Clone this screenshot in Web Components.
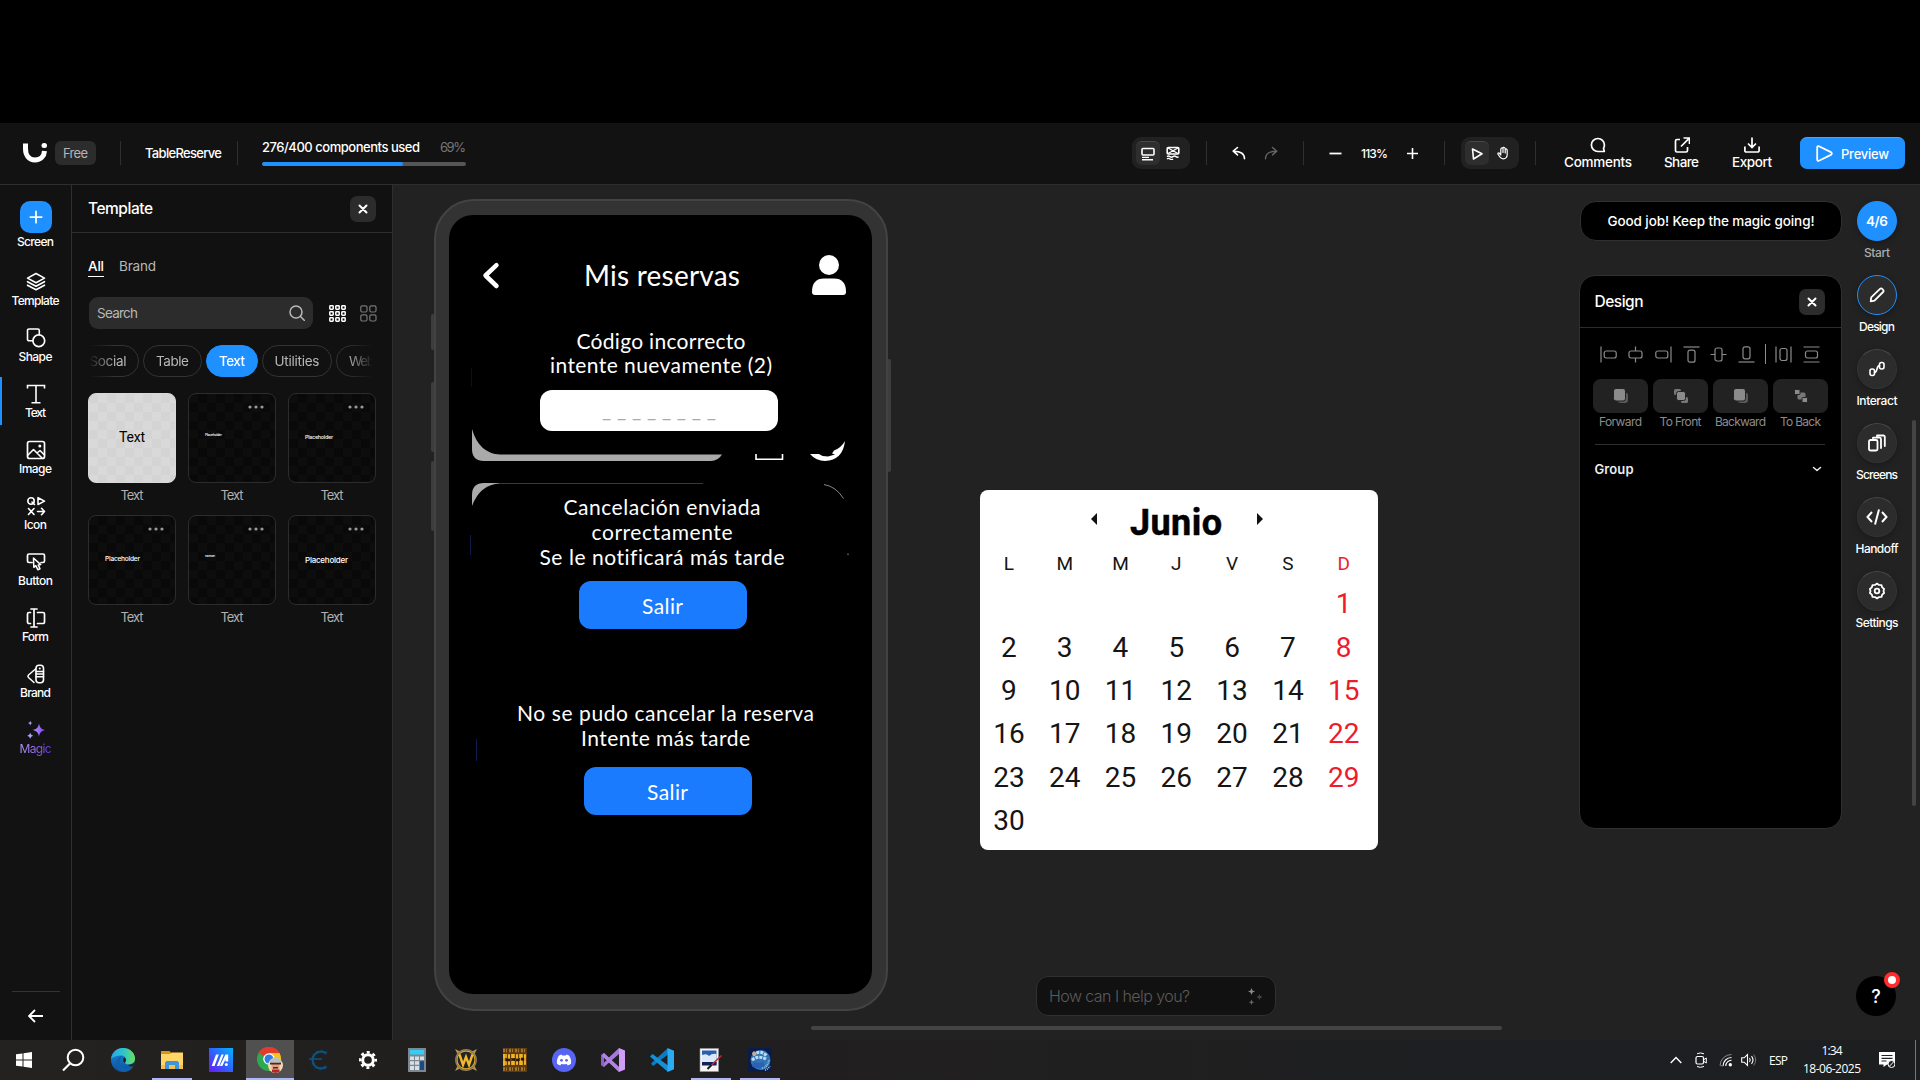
<!DOCTYPE html>
<html lang="es">
<head>
<meta charset="utf-8">
<title>TableReserve</title>
<style>
html,body{margin:0;height:100%;background:#000;overflow:hidden}
body{font-family:Inter,"Liberation Sans",sans-serif;color:#fff;width:1920px;height:1080px}
</style>
</head>
<body>
<editor-app></editor-app>
<script>
const S='fill="none" stroke="currentColor" stroke-linecap="round" stroke-linejoin="round"';
const ICONS={
logo:['0 0 24 20','<path d="M2.5 0.5v5.3c0 6.500 3.700 11.200 9.500 11.200s9.200-4.200 9.500-9" fill="none" stroke="#fff" stroke-width="5"/><rect x="18.500" y="0" width="5.500" height="5" rx="2.500" fill="#fff"/>'],
plus:['0 0 16 16',`<path d="M8 1.500v13M1.500 8h13" ${S} stroke-width="2"/>`],
x:['0 0 16 16',`<path d="M4.500 4.500l7 7M11.500 4.500l-7 7" ${S} stroke-width="2"/>`],
template:['0 0 20 20',`<path d="M10 1.500l8.500 4.600L10 10.700 1.500 6.100z M1.500 9.700L10 14.300l8.500-4.600 M1.500 13.200L10 17.800l8.500-4.600" ${S} stroke-width="1.600"/>`],
shape:['0 0 20 20',`<path d="M13.300 6V2.500a1.500 1.500 0 0 0-1.500-1.500H3a1.500 1.500 0 0 0-1.500 1.500v8.800A1.500 1.500 0 0 0 3 12.800h3.500" ${S} stroke-width="1.600"/><circle cx="12.800" cy="12.800" r="5.900" fill="none" stroke="currentColor" stroke-width="1.700"/>`],
text:['0 0 20 20',`<path d="M1.500 4.500v-3h17v3M10 1.500v17M5.500 18.700h9" fill="none" stroke="currentColor" stroke-width="1.600"/>`],
image:['0 0 20 20',`<rect x="1.500" y="1.500" width="17" height="17" rx="2" ${S} stroke-width="1.700"/><path d="M2 15l5.500-5.500L16 18M11 13l3-2.500 4.500 4.500" ${S} stroke-width="1.600"/><circle cx="13.800" cy="6" r="1.500" fill="currentColor"/>`],
icon:['0 0 20 20',`<circle cx="5" cy="5" r="3.200" ${S} stroke-width="1.600"/><path d="M6 6l2.500 2.500M12 1.700v6.800l6.500-3.400zM2.500 12.500l5.500 6M8 12.500l-5.500 6M11.500 15.500h7M15.500 12.300l3 3.200-3 3.200" ${S} stroke-width="1.600"/>`],
button:['0 0 20 20',`<path d="M6 10.500H3a1.500 1.500 0 0 1-1.500-1.500V3.500A1.500 1.500 0 0 1 3 2h14a1.500 1.500 0 0 1 1.500 1.500V9a1.500 1.500 0 0 1-1.500 1.500h-2" ${S} stroke-width="1.700"/><path d="M7.500 6l.3 9.300 2-1.600 2 4 2.200-1-1.800-3.800 2.500-.3z" ${S} stroke-width="1.500"/>`],
form:['0 0 20 20',`<path d="M4.500 4.500H3A1.500 1.500 0 0 0 1.500 6v8A1.500 1.500 0 0 0 3 15.500h1.500M11.500 4.500H17A1.500 1.500 0 0 1 18.500 6v8a1.500 1.500 0 0 1-1.500 1.500h-5.500M8 1v18M5 1h6M5 19h6" ${S} stroke-width="1.700"/>`],
brand:['0 0 20 20',`<rect x="10" y="1.300" width="7.500" height="17.400" rx="3" ${S} stroke-width="1.600"/><path d="M10 7.500h7.500M10 12.800h7.500M9.500 5L2.500 11a1.800 1.800 0 0 0 0 2.500L8 18.500M10 10h7.500" ${S} stroke-width="1.500"/><circle cx="13.800" cy="4.500" r="1" fill="currentColor"/>`],
magic:['0 0 20 20','<defs><linearGradient id="m" x1="0" x2="1"><stop offset="0" stop-color="#b79bff"/><stop offset="1" stop-color="#7a3df0"/></linearGradient></defs><path fill="url(#m)" d="M13 3.500c.9 4 2 5.500 6 6.500-4 1-5.100 2.500-6 6.500-.9-4-2-5.500-6-6.500 4-1 5.100-2.500 6-6.500z"/><path fill="#b79bff" d="M4.200 .8l.7 1.600 1.600.7-1.600.7-.7 1.600-.7-1.600-1.600-.7 1.600-.7zM4.200 12.800l1 2 2 1-2 1-1 2-1-2-2-1 2-1z"/>'],
back:['0 0 16 16',`<path d="M15 8H1M7 2L1 8l6 6" fill="none" stroke="currentColor" stroke-width="1.800"/>`],
search:['0 0 16 16',`<circle cx="7" cy="7" r="6" ${S} stroke-width="1.500"/><path d="M11.500 11.500l4 4" ${S} stroke-width="1.500"/>`],
grid3:['0 0 17 17',[0,6,12].map(y=>[0,6,12].map(x=>`<rect x="${x+.8}" y="${y+.8}" width="3.400" height="3.400" rx=".6" ${S} stroke-width="1.500"/>`).join('')).join('')],
grid2:['0 0 17 17',[0,9].map(y=>[0,9].map(x=>`<rect x="${x+.8}" y="${y+.8}" width="6.200" height="6.200" rx="1.500" ${S} stroke-width="1.200"/>`).join('')).join('')],
dots:['0 0 16 4','<circle cx="2" cy="2" r="1.600" fill="currentColor"/><circle cx="8" cy="2" r="1.600" fill="currentColor"/><circle cx="14" cy="2" r="1.600" fill="currentColor"/>'],
screenv:['0 0 14 14',`<rect x="1" y="1.500" width="12" height="6.500" rx="1" fill="none" stroke="currentColor" stroke-width="1.600"/><path d="M1 10.400h7M1 12.800h11" stroke="currentColor" stroke-width="1.400"/>`],
wire:['0 0 14 14',`<rect x="1.200" y="1.500" width="11.600" height="6.500" rx="1" fill="none" stroke="currentColor" stroke-width="1.600"/><path d="M2 2l10 5.500M12 2L2 7.500M1 10.600q1.500-1.200 3 0t3 0 3 0 2.500 0M1 13q1.500-1.200 3 0t3 0" fill="none" stroke="currentColor" stroke-width="1.400"/>`],
undo:['0 0 14 14',`<path d="M5.500 1.500L1.200 5.200l4.300 3.700M1.500 5.200c6 0 11 1.600 11 7.600" ${S} stroke-width="1.600"/>`],
redo:['0 0 14 14',`<path d="M8.500 1.500l4.300 3.700-4.300 3.700M12.500 5.200c-6 0-11 1.600-11 7.600" ${S} stroke-width="1.400"/>`],
minus:['0 0 13 13','<path d="M.5 6.500h12" stroke="currentColor" stroke-width="1.800"/>'],
add:['0 0 13 13','<path d="M1 6.500h11M6.500 1v11" stroke="currentColor" stroke-width="1.600"/>'],
cursor:['0 0 14 14',`<path d="M2.500 2l9.500 4.800L3.500 12z" ${S} stroke-width="1.600"/>`],
hand:['0 0 14 14',`<path d="M4.800 8V3.200M7 6.500V2M9.200 7V3M11.200 8V4.500M4.800 3.200C4.900 1.700 7 1.500 7 2.300M7 2C7.400 .8 9.200 1.400 9.200 3M9.200 3.200c.8-.9 2-.3 2 1.300v4c0 2.700-1.600 4.300-3.900 4.300-2.600 0-3.500-1.600-5.300-4.700C1.500 7 2.700 6.400 3.600 7.500L4.800 9" ${S} stroke-width="1.200"/>`],
comment:['0 0 16 16',`<path d="M14.300 14.500H8A6.500 6.500 0 1 1 14.400 8c0 2-.4 2.500-.9 3.300z" ${S} stroke-width="1.700"/>`],
share:['0 0 16 16',`<path d="M6 2.500H3A1.500 1.500 0 0 0 1.500 4v9.500A1.500 1.500 0 0 0 3 15h9a1.500 1.500 0 0 0 1.500-1.500V10M9.500 1h6v6M15.300 1.200L7 9.500" fill="none" stroke="currentColor" stroke-width="1.700"/>`],
export:['0 0 16 16',`<path d="M8 .5v10M4 6.500l4 4 4-4M.9 9.500v3.500A1.500 1.500 0 0 0 2.400 15h11.200a1.500 1.500 0 0 0 1.500-1.500V9.500" fill="none" stroke="currentColor" stroke-width="1.700"/>`],
play:['0 0 17 17',`<path d="M1.200 2.400v12.200c0 1 .8 1.500 1.700 1.100l12-5.800c1.200-.6 1.200-2.200 0-2.800l-12-5.800c-.9-.4-1.700.1-1.700 1.100z" ${S} stroke-width="1.800"/>`],
pencil:['0 0 16 16',`<path d="M1.700 14.300l.5-4L11 1.900a1.500 1.500 0 0 1 2.200 0l.9.9a1.500 1.500 0 0 1 0 2.200L5.500 13.700z" ${S} stroke-width="1.800"/>`],
interact:['0 0 16 16',`<rect x="1" y="8" width="4.500" height="6.500" rx="2" ${S} stroke-width="1.600"/><rect x="10.500" y="1.500" width="4.500" height="6.500" rx="2" ${S} stroke-width="1.600"/><path d="M5.500 11.500c3.500 0 1.500-7 5-7" ${S} stroke-width="1.600"/>`],
screens:['0 0 18 18',`<rect x="1" y="6" width="8.500" height="10.500" rx="1.500" ${S} stroke-width="1.800"/><path d="M5 3.700h6.500a1.500 1.500 0 0 1 1.500 1.500V14M9 1.500h6.300a1.500 1.500 0 0 1 1.500 1.500v9" ${S} stroke-width="1.800"/><path d="M5 4v2M9 2v2" stroke="currentColor" stroke-width="1.500"/>`],
code:['0 0 22 18',`<path d="M6 4L1.500 9 6 14M16 4l4.500 5-4.500 5M13 1.500L9 16.500" fill="none" stroke="currentColor" stroke-width="2"/>`],
settings:['0 0 18 18',`<path d="M9 1.600l2 1.300 2.500.2.700 2.300 1.900 1.600-.6 2 .6 2-1.900 1.600-.7 2.300-2.500.2-2 1.300-2-1.300-2.500-.2-.7-2.300L1.900 11l.6-2-.6-2 1.900-1.600.7-2.300L7 2.900z" ${S} stroke-width="1.800"/><circle cx="9" cy="9" r="2.300" ${S} stroke-width="1.800"/>`],
aL:['0 0 17 17',`<path d="M1 .5v16" stroke="currentColor" stroke-width="1.200"/><rect x="4.200" y="5" width="12" height="7" rx="2" ${S} stroke-width="1.200"/>`],
aC:['0 0 17 17',`<path d="M8.500 .5V5M8.500 12v4.500" stroke="currentColor" stroke-width="1.200"/><rect x="2" y="5" width="13" height="7" rx="2" ${S} stroke-width="1.200"/>`],
aR:['0 0 17 17',`<path d="M16 .5v16" stroke="currentColor" stroke-width="1.200"/><rect x=".8" y="5" width="12" height="7" rx="2" ${S} stroke-width="1.200"/>`],
aT:['0 0 17 17',`<path d="M.5 1h16" stroke="currentColor" stroke-width="1.200"/><rect x="5" y="4.200" width="7" height="12" rx="2" ${S} stroke-width="1.200"/>`],
aM:['0 0 17 17',`<path d="M.5 8.500H5M12 8.500h4.500" stroke="currentColor" stroke-width="1.200"/><rect x="5" y="2" width="7" height="13" rx="2" ${S} stroke-width="1.200"/>`],
aB:['0 0 17 17',`<path d="M.5 16h16" stroke="currentColor" stroke-width="1.200"/><rect x="5" y=".8" width="7" height="12" rx="2" ${S} stroke-width="1.200"/>`],
dH:['0 0 17 17',`<path d="M1 .5v16M16 .5v16" stroke="currentColor" stroke-width="1.200"/><rect x="5" y="2.500" width="7" height="12" rx="2" ${S} stroke-width="1.200"/>`],
dV:['0 0 17 17',`<path d="M.5 1h16M.5 16h16" stroke="currentColor" stroke-width="1.200"/><rect x="2.500" y="5" width="12" height="7" rx="2" ${S} stroke-width="1.200"/>`],
fwd:['0 0 16 16','<rect x="4.500" y="4.500" width="10.500" height="10.500" rx="3" fill="#5a5a5a"/><rect x=".5" y=".5" width="12" height="12.500" rx="2.500" fill="#8b8b8b" stroke="#222"/>'],
front:['0 0 16 16','<rect x="1" y="1" width="7" height="6" rx="1.500" fill="#777"/><rect x="8" y="9" width="7" height="6" rx="1.500" fill="#777"/><rect x="3.500" y="3.500" width="9" height="9" rx="2" fill="#8b8b8b" stroke="#222"/>'],
toback:['0 0 16 16','<rect x="4.500" y="4.500" width="8" height="7" rx="1.500" fill="#777"/><rect x="1.500" y="1.500" width="5.500" height="5" rx="1" fill="#8b8b8b" stroke="#222"/><rect x="9" y="9.500" width="5.500" height="5" rx="1" fill="#8b8b8b" stroke="#222"/>'],
chev:['0 0 10 6',`<path d="M1.500 1.500L5 4.500l3.500-3" ${S} stroke-width="1.500"/>`],
spark:['0 0 16 18','<path fill="#8a8a8a" d="M4.500 1l1 2.500L8 4.500 5.500 5.500l-1 2.500-1-2.500L1 4.500l2.500-1z"/><path fill="#444" d="M12.500 7l.9 2.100 2.100.9-2.100.9-.9 2.100-.9-2.100L9.500 10l2.100-.9z"/><path fill="#666" d="M4.500 12.500l.8 1.900 1.900.8-1.900.8-.8 1.900-.8-1.900-1.900-.8 1.900-.8z"/>'],
// taskbar
win:['0 0 16 16','<path fill="#fff" d="M0 2.300l6.500-.9v6.100H0zM7.500 1.200L16 0v7.500H7.500zM0 8.500h6.500v6.100L0 13.700zM7.500 8.500H16V16l-8.500-1.200z"/>'],
find:['0 0 24 24',`<circle cx="14.500" cy="9.500" r="7.800" fill="none" stroke="#fff" stroke-width="2"/><path d="M9 15.500L2 22.500" stroke="#fff" stroke-width="2.200"/>`],
edge:['0 0 24 24','<defs><linearGradient id="e1" x1="0" x2="1"><stop offset="0" stop-color="#27a5e8"/><stop offset=".55" stop-color="#2fc6c9"/><stop offset="1" stop-color="#6be05a"/></linearGradient><linearGradient id="e2" x1="0" y1="0" x2="0" y2="1"><stop offset="0" stop-color="#1b8ddb"/><stop offset="1" stop-color="#0c4f9c"/></linearGradient></defs><circle cx="12" cy="12" r="12" fill="url(#e2)"/><path fill="url(#e1)" d="M0 11C.8 4.500 5.600 0 12 0c7 0 12 5 12 10.300 0 4-3 6.200-6.400 6.200-2.500 0-3.600-1-3.600-1.700 0-.6 1-1 1-3 0-2.200-2-4.300-5-4.300-4 0-8 1.500-10 3.500z"/><path fill="#1160ad" d="M8.600 14.500c0-3 1.400-5 3.400-6.300-3.500-.6-7 2.800-7 7.200 0 4.300 3.500 8 8.500 8.500 4-.4 7-2.300 8.700-5.400-5 3-13.600 2-13.600-4z"/><path fill="#222" d="M14 15c-2-1-2.400-4-.7-5.800C14.600 10 15 11 15 12c0 1.500-1 2-1 3zM17 16.800c3 .2 5.500-.8 6.800-3-.2 2-1 3.700-1.800 4.800-2 .3-3.800-.3-5-1.800z"/>'],
folder:['0 0 22 18','<path fill="#d9960f" d="M0 0h8.500l1.500 1.500v3H0z"/><path fill="#ffd566" d="M0 3h9l1.500-1.500H22V18H0z"/><path fill="#f4c04a" d="M0 14h22v4H0z"/><path fill="#3d96dd" d="M4 18v-6.500L5.500 10h11l1.500 1.500V18h-4v-4H8v4z"/>'],
ma:['0 0 24 24','<defs><linearGradient id="a1" x1="0" y1="1" x2="1" y2="0"><stop offset="0" stop-color="#6a18f5"/><stop offset=".5" stop-color="#2f62ff"/><stop offset="1" stop-color="#00b4ff"/></linearGradient></defs><path fill="url(#a1)" d="M0 0h24v24H0z"/><path fill="#fff" d="M7 6.500h2.800L5.500 18H2.700zM12.500 6.500h2.200L10.300 18H7.800zM16.500 6.500h2.700v7h-2.700v-2.300L13.300 18h-2.500z"/><circle cx="17.300" cy="16.500" r="1.500" fill="#fff"/>'],
chrome:['0 0 26 26','<circle cx="12" cy="12" r="12" fill="#2da94f"/><path fill="#e33b2e" d="M12 12L1.600 6A12 12 0 0 1 22.400 6z"/><path fill="#fbc116" d="M12 6h10.400A12 12 0 0 1 12 24l5-9z"/><path fill="#e33b2e" d="M1.600 6A12 12 0 0 1 22.400 6H12z"/><circle cx="12" cy="12" r="5.800" fill="#fff"/><circle cx="12" cy="12" r="4.500" fill="#2f7de9"/><circle cx="18.500" cy="18.500" r="7.500" fill="#f3d9ad"/><path fill="#b9c0c2" d="M13 15c0-6 11-6 11 0v2H13z"/><path fill="#e9a184" d="M14.500 17h8v5.500h-8z"/><path fill="#4b2a22" d="M13 15.800h11v1.700H13zM16 20h5v1.500h-5z"/><path fill="#b3262a" d="M15 22.500h7.500v2.500l-4 1-3.500-1z"/>'],
cheat:['0 0 24 24','<path d="M19.500 5.500A8.500 8.500 0 1 0 19.500 18.500" fill="none" stroke="#0c3149" stroke-width="5" stroke-dasharray="1.800 2.600"/><path d="M19.500 5.500A8.500 8.500 0 1 0 19.500 18.500" fill="none" stroke="#14547c" stroke-width="2"/><path d="M2 11h13" stroke="#154f74" stroke-width="1.600"/>'],
gear:['0 0 20 20','<circle cx="10" cy="10" r="5.300" fill="none" stroke="#fff" stroke-width="3"/><circle cx="10" cy="10" r="7.700" fill="none" stroke="#fff" stroke-width="2.600" stroke-dasharray="3 3.050" stroke-dashoffset="1.500"/>'],
calc:['0 0 18 24','<path fill="#7c8791" d="M0 0h18v24H0z"/><path fill="#35cdf5" d="M2 2h14v4.500H2z"/><path fill="#d7dee4" d="M2 8.500h4V12H2zM7 8.500h4V12H7zM12 8.500h4V12h-4zM2 13.200h4v3.600H2zM7 13.200h4v3.600H7zM2 18h4v4H2zM7 18h4v4H7z"/><path fill="#174a86" d="M12 13.200h4V22h-4z"/>'],
wow:['0 0 24 24','<path fill="#b89a4a" d="M1 1l4 2 14 0 4-2-2 4v14l2 4-4-2H5l-4 2 2-4V5z"/><circle cx="12" cy="12" r="10.300" fill="#17120c" stroke="#8d8064" stroke-width="1.200"/><circle cx="12" cy="12" r="9" fill="#20242c" stroke="#dba32b" stroke-width="1.300"/><path d="M5.500 6.500L9 17l3-8 3 8 3.500-10.500" fill="none" stroke="#f3b82a" stroke-width="2.400"/>'],
ruby:['0 0 24 24','<path fill="#5c3a14" d="M0 0h24v24H0z"/><path d="M0 2.500h24M0 21h24" stroke="#a0742c" stroke-width="3.500" stroke-dasharray="2 1 1 2"/><path d="M0 8h24M0 15h24" stroke="#d99a20" stroke-width="4" stroke-dasharray="4 1 2 1"/><path d="M1 18V6M6 16V7M10 17V6M14 16V7M18 17V6M22 16V7" stroke="#f7bd25" stroke-width="1.500"/><path d="M3 12h4M9 11.500h3M13 12h3M18 11h3" stroke="#291407" stroke-width="2.400"/>'],
discord:['0 0 24 24','<circle cx="12" cy="12" r="12" fill="#5865f2"/><path fill="#fff" d="M7 7.500l2.500-1 .7 1h3.600l.7-1 2.500 1c1.800 2.500 2.400 5.200 2 8.200-1 .9-2.100 1.400-3.300 1.700l-.9-1.500c-1.800.5-3.800.5-5.600 0l-.9 1.500c-1.200-.3-2.300-.8-3.300-1.700-.4-3 .2-5.700 2-8.200z"/><circle cx="9.500" cy="12.300" r="1.400" fill="#5865f2"/><circle cx="14.500" cy="12.300" r="1.400" fill="#5865f2"/>'],
vs:['0 0 24 24','<path fill="#7c51b5" d="M0 7l3-2 15 14v5L3 9.500v8L0 17z"/><path fill="#a679dc" d="M0 17l18-17v6L3 19z"/><path fill="#8d5fca" d="M0 7l3-2v14l-3-2z"/><path fill="#222" d="M3 9.500L6 12l-3 2.500z"/><path fill="#cf9cf7" d="M18 0l6 2.500v19L18 24z"/><path fill="#b183e6" d="M3 5l15 14v5L1 8z"/>'],
vscode:['0 0 24 24','<path fill="#0b7cc4" d="M18 0L1 15.500l2 2.500L18 6.500z"/><path fill="#148fd8" d="M18 24L0 8.500 2.500 6 18 17.500z"/><path fill="#2bacf2" d="M17.500 0L24 2.800v18.400L17.500 24z"/>'],
paint:['0 0 24 24','<path fill="#f4f4f4" stroke="#999" stroke-width=".6" d="M1 .5h18.500v23H1z"/><path fill="#2a5eb0" d="M3 2.500h14.500v14H3z"/><path fill="#dbe9f8" d="M3 7q5-2 7 1 3-3 7.500-2v8H3z"/><path fill="#10205a" d="M3 14h14.500v3.500H3z"/><path d="M22.500 7.500L12.500 17" stroke="#c22a2e" stroke-width="1.600"/><path d="M12.500 17l-4 4" stroke="#1a1a1a" stroke-width="2"/>'],
game:['0 0 24 24','<path fill="#0a1c49" d="M0 0h24v24H0z"/><circle cx="12.500" cy="12" r="10" fill="#3473b4"/><path d="M5 7q7-6 14 1M4 12q6-5 14-1" fill="none" stroke="#b9ddf2" stroke-width="3" stroke-dasharray="3 1"/><path d="M14 20q6-1 7-8M17 22q3-1 5-4" fill="none" stroke="#8cc3e8" stroke-width="2" stroke-dasharray="1 1"/><path d="M5 16q5 3 11 0" stroke="#2a62b4" stroke-width="5" fill="none"/><path d="M5 4l3 3" stroke="#d5a58a" stroke-width="3"/>'],
tup:['0 0 12 8','<path d="M.7 7L6 1.500 11.300 7" fill="none" stroke="#fff" stroke-width="1.400"/>'],
tcam:['0 0 12 16','<rect x="1" y="4.500" width="7.500" height="7.500" rx="1.500" fill="none" stroke="#fff" stroke-width="1.200"/><path d="M9 7.500l2.300-1.500v5L9 9.500M2 1.800Q5 0 9 1.800M2 14.500q3 1.600 7 0" fill="none" stroke="#fff"/>'],
twifi:['0 0 14 14','<path d="M1 12.500A11.500 11.500 0 0 1 12.500 1.500" fill="none" stroke="#888"/><path d="M4 13A8.500 8.500 0 0 1 12.500 4.500M6.800 13A5.700 5.700 0 0 1 12.500 7.300" fill="none" stroke="#fff" stroke-width="1.100"/><circle cx="11.300" cy="11.800" r="1.700" fill="#fff"/><path d="M1 12.500l3 .5" stroke="#777"/>'],
tvol:['0 0 16 14','<path d="M.7 4.800h2.500L6.500 1.500v11L3.200 9.200H.7z" fill="none" stroke="#fff" stroke-width="1.100"/><path d="M8.500 5q1.500 2 0 4M10.500 3.200q3 3.800 0 7.600" fill="none" stroke="#fff" stroke-width="1.100"/><path d="M12.700 1.500q4 5.500 0 11" fill="none" stroke="#777"/>'],
tnote:['0 0 16 16','<path fill="#fff" d="M0 0h16v12.500H8L4.500 15v-2.500H0z"/><path d="M2.500 3.500h11M2.500 6.300h11M2.500 9h5" stroke="#222" stroke-width="1.200"/><circle cx="12.500" cy="12" r="3.500" fill="#222" stroke="#fff" stroke-width="1"/><path d="M10.300 14.300l4.500-4.600" stroke="#fff"/>']
};
const el=(name,html)=>customElements.define(name,class extends HTMLElement{
  constructor(){super();this.attachShadow({mode:'open'})}
  connectedCallback(){this.shadowRoot.innerHTML=typeof html==='function'?html(this):html}
});
const ic=(n,w,h=w,st='')=>`<ui-icon name="${n}" w="${w}" h="${h}" style="${st}"></ui-icon>`;
const ft=(t,w,st='')=>`<fit-text w="${w}" style="${st}">${t}</fit-text>`;

el('editor-app',`<style>:host{display:flex;flex-direction:column;width:1920px;height:1080px;background:#000;padding-top:123px;box-sizing:border-box}
.main{display:flex;height:855px}</style>
<top-bar></top-bar><div class="main"><tool-rail></tool-rail><template-panel></template-panel><design-canvas></design-canvas></div><task-bar></task-bar>`);

el('top-bar',`<style>:host{display:flex;align-items:center;height:60px;padding-bottom:1px;flex:none;background:#121212;border-bottom:1px solid #2e2e2e;font-size:13px;font-weight:500}
.badge{margin-left:8px;width:41px;height:24px;border-radius:6px;background:#2c2c2c;color:#b5b5b5;display:flex;align-items:center;justify-content:center;font-weight:400;font-size:13px}
i{width:1px;height:24px;background:#303030;flex:none}
.use{margin-left:24px;width:204px;display:flex;flex-direction:column;gap:7px;padding-bottom:1px}
.row{display:flex;justify-content:space-between;line-height:16px;font-size:13px}
.bar{height:4px;border-radius:2px;background:#555;overflow:hidden}.bar b{display:block;height:4px;width:141px;background:#1e90ff;border-radius:2px}
.grp{display:flex;width:58px;height:32px;box-sizing:border-box;border-radius:9px;background:#212121;padding:4px;gap:1px}
.grp span{width:24px;height:24px;border-radius:6px;display:flex;align-items:center;justify-content:center;box-sizing:border-box}.grp .on{background:#2e2e2e;border-top:1px solid #484848}
.act{display:flex;flex-direction:column;align-items:center;line-height:16px;gap:1px;font-size:13.500px}
.pv{margin-left:28px;width:105px;height:32px;box-sizing:border-box;border-radius:7px;background:#1e90ff;border-top:1px solid #4aa6ff;display:flex;align-items:center;padding-left:16px;gap:8px;font-size:13px}
</style>
${ic('logo',24,20,'margin-left:23px')}<div class="badge">${ft('Free',25)}</div><i style="margin-left:24px"></i>
${ft('TableReserve',77,'margin-left:24px')}<i style="margin-left:15px"></i>
<div class="use"><div class="row">${ft('276/400 components used',158)}${ft('69%',26,'color:#777;font-weight:400')}</div><div class="bar"><b></b></div></div>
<div class="grp" style="margin-left:666px"><span class="on">${ic('screenv',14)}</span><span>${ic('wire',14)}</span></div>
<i style="margin-left:16px"></i>${ic('undo',14,14,'margin-left:25px')}${ic('redo',14,14,'margin-left:18px;color:#666')}<i style="margin-left:25px"></i>
${ic('minus',13,13,'margin-left:25px')}${ft('113%',27,'margin-left:19px;font-size:12px')}${ic('add',13,13,'margin-left:18px')}<i style="margin-left:25px"></i>
<div class="grp" style="margin-left:16px"><span class="on">${ic('cursor',14)}</span><span style="margin-left:1px">${ic('hand',14)}</span></div><i style="margin-left:16px"></i>
<div class="act" style="margin-left:28px">${ic('comment',16)}${ft('Comments',68)}</div>
<div class="act" style="margin-left:32px">${ic('share',16)}${ft('Share',35)}</div>
<div class="act" style="margin-left:33px">${ic('export',16)}${ft('Export',40)}</div>
<div class="pv">${ic('play',17)}${ft('Preview',48)}</div>`);

el('tool-rail',`<style>:host{display:flex;flex-direction:column;align-items:center;box-sizing:border-box;width:72px;background:#121212;border-right:1px solid #2e2e2e;padding-top:16px;font-size:12px;font-weight:500;line-height:16px;gap:8px}
.scr{display:flex;flex-direction:column;align-items:center;height:56px;gap:1px}
.scr>span{width:32px;height:32px;border-radius:10px;background:#1e90ff;display:flex;align-items:center;justify-content:center}
.bot{width:48px;margin-top:auto;border-top:1px solid #333;height:47px;padding-bottom:1px;display:flex;align-items:center;justify-content:center}</style>
<div class="scr"><span>${ic('plus',14)}</span>${ft('Screen',37)}</div>
${[['template','Template',48],['shape','Shape',34],['text','Text',21],['image','Image',33],['icon','Icon',23],['button','Button',35],['form','Form',27],['brand','Brand',31],['magic','Magic',32]].map(a=>`<rail-item icon="${a[0]}" w="${a[2]}" ${a[0]=='text'?'on':''} ${a[0]=='magic'?'magic':''}>${a[1]}</rail-item>`).join('')}
<div class="bot">${ic('back',16)}</div>`);
el('rail-item',h=>`<style>:host{display:flex;flex-direction:column;align-items:center;height:48px;box-sizing:border-box;padding-top:7px;gap:1px;width:71px;border-left:2px solid transparent;border-right:2px solid transparent}
:host([on]){border-left-color:#1e90ff}:host([magic]) fit-text{color:transparent;background:linear-gradient(90deg,#b79bff,#6a2fe0);-webkit-background-clip:text;background-clip:text;font-weight:400}</style>${ic(h.getAttribute('icon'),20)}${ft(h.textContent,h.getAttribute('w'))}`);

el('template-panel',`<style>:host{display:flex;flex-direction:column;box-sizing:border-box;width:321px;background:#111;border-right:1px solid #2e2e2e;font-size:13.500px;color:#b8b8b8}
.hd{height:47px;flex:none;border-bottom:1px solid #2e2e2e;display:flex;align-items:center;justify-content:space-between;padding:0 16px;font-size:15.500px;font-weight:500;color:#fff}
.cl{width:26px;height:26px;border-radius:7px;background:#2c2c2c;display:flex;align-items:center;justify-content:center}
.tabs{display:flex;gap:15px;margin:23px 0 0 16px;height:20px;line-height:21px}.tabs b{font-weight:500;color:#fff;height:20px;border-bottom:1px solid #fff}
.sr{display:flex;align-items:center;margin:21px 0 0 17px}.in{width:224px;height:32px;box-sizing:border-box;padding:0 8px;border-radius:9px;background:#2c2c2c;display:flex;align-items:center;justify-content:space-between}
.chips{display:flex;gap:4px;margin:16px 0 0 17px;width:284px;overflow:hidden;-webkit-mask:linear-gradient(90deg,transparent,#000 26px,#000 258px,transparent);mask:linear-gradient(90deg,transparent,#000 26px,#000 258px,transparent)}
.chips span{flex:none;box-sizing:border-box;height:32px;border:1px solid #333;border-radius:16px;display:flex;align-items:center;justify-content:center}
.chips .on{background:#1e90ff;border-color:#1e90ff;color:#fff;font-weight:500}
.grid{display:grid;grid-template-columns:repeat(3,88px);column-gap:12px;row-gap:10px;margin:16px 0 0 16px}</style>
<div class="hd">${ft('Template',65)}<div class="cl">${ic('x',16)}</div></div>
<div class="tabs"><b>${ft('All',16)}</b>${ft('Brand',37)}</div>
<div class="sr"><div class="in">${ft('Search',41)}${ic('search',16)}</div>${ic('grid3',17,17,'margin-left:16px;color:#fff')}${ic('grid2',17,17,'margin-left:14px;color:#777')}</div>
<div class="chips"><span style="width:62px;margin-left:-12px">${ft('Social',37)}</span><span style="width:59px">${ft('Table',33)}</span><span class="on" style="width:52px">${ft('Text',26)}</span><span style="width:70px">${ft('Utilities',45)}</span><span style="width:52px">${ft('Web',26)}</span></div>
<div class="grid"><tpl-card light></tpl-card><tpl-card s="3.600" w="17" y="-6"></tpl-card><tpl-card s="5.400" w="28" y="-3"></tpl-card><tpl-card s="6.600" w="35" y="-2"></tpl-card><tpl-card s="2.200" w="10" y="-8"></tpl-card><tpl-card s="8" w="43"></tpl-card></div>`);
el('tpl-card',h=>{const L=h.hasAttribute('light');return `<style>:host{display:flex;flex-direction:column;align-items:center;height:112px;color:#b0b0b0;font-size:13px}
.b{width:88px;height:90px;box-sizing:border-box;border-radius:8px;border:1px solid #2c2c2c;background:repeating-conic-gradient(#090909 0 25%,#0d0d0d 0 50%) 0 0/18px 18px;display:flex;align-items:center;position:relative;color:#fff;padding-left:16px}
:host([light]) .b{padding:0;justify-content:center;border-color:#d9d9d9;background:repeating-conic-gradient(#d9d9d9 0 25%,#d4d4d4 0 50%) 0 0/18px 18px;color:#000;font-size:14px}
.d{position:absolute;right:11px;top:11px;height:4px;display:flex;color:#999}
.l{line-height:18px;margin-top:3px}</style><div class="b">${L?ft('Text',26,'font-family:Roboto;margin-top:-2px'):`<span class="d">${ic('dots',16,4)}</span>${ft('Placeholder',h.getAttribute('w'),`font-weight:500;font-size:${h.getAttribute('s')}px;margin-top:${(h.getAttribute('y')||0)}px`)}`}</div><div class="l">${ft('Text',23)}</div>`});

// The workspace is a free canvas: frames and floating panels are placed on it by coordinates.
el('design-canvas',`<style>:host{display:block;position:relative;flex:1;background:#222;overflow:hidden}
:host>*{position:absolute}
.hs{left:418px;top:841px;width:691px;height:4px;border-radius:2px;background:#444}
.vs{left:1519px;top:235px;width:4px;height:386px;border-radius:2px;background:#444}
.pill{left:1187px;top:16px;width:262px;height:40px;box-sizing:border-box;border:1px solid #303030;border-radius:16px;background:#000;display:flex;align-items:center;justify-content:center;font-size:13.500px;font-weight:500}
.ask{left:643px;top:791px;width:240px;height:40px;box-sizing:border-box;border:1px solid #303030;border-radius:12px;background:#111;display:flex;align-items:center;justify-content:space-between;padding:0 12px 0 12px;font-size:16px;font-weight:300;color:#5b5b5b}
.help{left:1463px;top:791px;width:40px;height:40px;border-radius:50%;background:#000;display:flex;align-items:center;justify-content:center;font-size:18px;font-weight:500}
.help i{position:absolute;box-sizing:border-box;right:-4px;top:-4px;width:16px;height:16px;border-radius:50%;background:#fff;border:4px solid #ff2d2d}
</style>
<phone-frame style="left:38px;top:14px"></phone-frame><month-calendar style="left:587px;top:305px"></month-calendar>
<div class="pill">${ft('Good job! Keep the magic going!',207)}</div>
<design-panel style="left:1185.500px;top:90px"></design-panel><side-nav style="left:1448px;top:16px"></side-nav>
<div class="ask">${ft('How can I help you?',141)}${ic('spark',16,18)}</div><div class="help">?<i></i></div><div class="hs"></div><div class="vs"></div>`);

// Artboard content uses absolute coordinates because each node is freely placed by the designer.
const T=(t,cx,base,w,s=21)=>`<div style="left:${cx-w/2-431}px;top:${base-199-(s>22?24.5:23)}px;font-size:${s}px;line-height:30px">${ft(t,w)}</div>`;
el('phone-frame',`<style>:host{display:block;width:460px;height:812px;font-family:Lato,"Liberation Sans",sans-serif}
div,svg{position:absolute}
.k{background:#3d3d3d;width:4px;border-radius:2px}
.body{left:3px;top:0;width:454px;height:812px;box-sizing:border-box;border:2px solid #434343;border-radius:40px;background:#333}
.scr{left:18px;top:15.500px;width:423px;height:779.500px;border-radius:24px;background:#000}
.btn{width:168px;height:48px;border-radius:12px;background:#1a7bff;display:flex;align-items:center;justify-content:center;font-size:21px;padding-right:1px;box-sizing:border-box}
.inp{left:109px;top:191px;width:238px;height:40.500px;border-radius:12px;background:#fff;color:#a5a7c4;display:flex;align-items:center;justify-content:center;font-size:20px;box-sizing:border-box;padding-bottom:2px}</style>
<div class="k" style="left:0;top:115px;height:36px"></div><div class="k" style="left:0;top:183px;height:70px"></div><div class="k" style="left:0;top:262px;height:70px"></div><div class="k" style="left:456px;top:160px;height:113px"></div>
<div class="body"></div><div class="scr"></div>
<svg style="left:0;top:0" width="460" height="812" viewBox="431 199 460 812"><path d="M496.500 265.200L485.500 275.500 496.500 286" fill="none" stroke="#fff" stroke-width="4.500" stroke-linecap="round" stroke-linejoin="round"/>
<circle cx="829" cy="265" r="10" fill="#fff"/><path fill="#fff" d="M812 292c0-9 4-13.500 12-13.500h10c8 0 12 4.500 12 13.500 0 2-1 3-3 3h-28c-2 0-3-1-3-3z"/>
<path fill="#aaa" d="M472 429v20q0 12 12 12h227q7 0 11-6.500H500q-21-1-28-25.500z"/>
<path d="M756 454v5.200h26.500V454" fill="none" stroke="#fff" stroke-width="1.600"/>
<path fill="#fff" d="M810 454q6 7 15 7 18-1 20-20-4 7-11 9.500l-2 3 3 1-7 2q-6 0-9-2.500z"/>
<path fill="#aaa" d="M472 506v-11q0-12 12-12h16v.6q-20 1-28 22.400z"/><path stroke="#3a3a3a" stroke-width="1" d="M499 483.500h204"/><path fill="none" stroke="#aaa" stroke-width=".8" d="M824 484.500q12 2 19.500 14"/>
<path d="M471.500 368v19" stroke="#051022"/><path d="M470.500 535v20" stroke="#0a1b45"/><path d="M476.500 739v22" stroke="#0a1f50"/><path d="M848 553.500v1.500" stroke="#999"/></svg>
${T('Mis reservas',662,284.5,156,28)}${T('Código incorrecto',661,349,169)}${T('intente nuevamente (2)',661,373,222)}
<div class="inp">${ft('_ _ _ _ _ _ _ _',114)}</div>
${T('Cancelación enviada',662,515,197)}${T('correctamente',662,540,141)}${T('Se le notificará más tarde',662,565,245)}
<div class="btn" style="left:148px;top:382px">${ft('Salir',41)}</div>
${T('No se pudo cancelar la reserva',665.5,721,297)}${T('Intente más tarde',665.5,746,169)}
<div class="btn" style="left:153px;top:568px">${ft('Salir',41)}</div>`);

el('month-calendar',()=>{let c='';'LMMJVSD'.split('').forEach((d,i)=>c+=`<span class="w ${i==6?'r':''}">${d}</span>`);for(let i=0;i<6;i++)c+='<span></span>';for(let d=1;d<=30;d++)c+=`<span class="${d%7==1?'r':''}">${d}</span>`;
return `<style>:host{display:block;box-sizing:border-box;width:398px;height:360px;border-radius:8px;background:#fff;color:#151515;font-family:Roboto,sans-serif;padding:12px 0 0 1px}
.h{display:flex;align-items:center;justify-content:center;height:42px;font-size:36px;font-weight:700;color:#000;padding-right:6px;-webkit-text-stroke:.5px #000}
.h i{width:0;height:0;border:6px solid transparent;margin-top:-8px}.h .p{border-right-color:#111;border-left:0;margin-right:33.500px}.h .n{border-left-color:#111;border-right:0;margin-left:34.500px}
.g{display:grid;grid-template-columns:repeat(7,55.800px);grid-template-rows:38px repeat(6,43.400px);font-size:28px}
.g span{display:flex;align-items:center;justify-content:center}.w{font-size:19px}.g .r{color:#ed1c2b}</style>
<div class="h"><i class="p"></i>${ft('Junio',92)}<i class="n"></i></div><div class="g">${c}</div>`});

el('design-panel',`<style>:host{display:flex;flex-direction:column;box-sizing:border-box;width:263.500px;height:554px;border:1px solid #303030;border-radius:16px;background:#000;color:#8c8c8c;font-size:12px}
.hd{height:51px;border-bottom:1px solid #2c2c2c;display:flex;align-items:center;justify-content:space-between;padding:0 16px 0 15px;color:#fff;font-size:15.500px;font-weight:500}
.cl{width:26px;height:26px;border-radius:7px;background:#2c2c2c;display:flex;align-items:center;justify-content:center}
.al{display:flex;align-items:center;gap:10.700px;padding-left:20px;margin-top:16px;height:20px}.al i{width:1px;height:20px;background:#8c8c8c;margin:0 -1px}
.or{display:flex;gap:5px;padding-left:13.500px;margin-top:15px}.or div{width:55px;display:flex;flex-direction:column;align-items:center;line-height:17px}.or span{width:55px;height:34px;border-radius:8px;background:#222;display:flex;align-items:center;justify-content:center}
hr{width:230px;margin:14px 0 0 15px;border:0;border-top:1px solid #2e2e2e}
.gr{display:flex;align-items:center;justify-content:space-between;padding:0 19px 0 15px;margin-top:14px;height:20px;color:#eee;font-size:13px;font-weight:600}</style>
<div class="hd">${ft('Design',49)}<div class="cl">${ic('x',16)}</div></div>
<div class="al">${['aL','aC','aR','aT','aM','aB'].map(n=>ic(n,17)).join('')}<i></i>${ic('dH',17)}${ic('dV',17)}</div>
<div class="or"><div><span>${ic('fwd',16)}</span>${ft('Forward',43)}</div><div><span>${ic('front',16)}</span>${ft('To Front',42)}</div><div><span>${ic('fwd',16)}</span>${ft('Backward',51)}</div><div><span>${ic('toback',16)}</span>${ft('To Back',41)}</div></div>
<hr><div class="gr">${ft('Group',39)}${ic('chev',10,6)}</div>`);

el('side-nav',`<style>:host{display:flex;flex-direction:column;width:72px;font-size:12px;font-weight:500;line-height:16px}
div{height:74px;display:flex;flex-direction:column;align-items:center;gap:4px}
span{width:40px;height:40px;box-sizing:border-box;border-radius:50%;background:#2c2c2c;border:1px solid #333;border-top-color:#484848;display:flex;align-items:center;justify-content:center;box-shadow:0 2px 6px #0004}
.a{background:#1e90ff;border-color:#1e90ff;font-size:13.500px;font-weight:600}.b{border-color:#1e90ff}</style>
<div><span class="a">${ft('4/6',22)}</span>${ft('Start',26,'color:#aaa')}</div><div><span class="b">${ic('pencil',16)}</span>${ft('Design',36)}</div><div><span>${ic('interact',16)}</span>${ft('Interact',41)}</div><div><span>${ic('screens',18)}</span>${ft('Screens',42)}</div><div><span>${ic('code',22,18)}</span>${ft('Handoff',43)}</div><div><span>${ic('settings',18)}</span>${ft('Settings',43)}</div>`);

el('task-bar',`<style>:host{display:flex;align-items:center;height:40px;background:linear-gradient(90deg,#232220,#1f1e1e 30%,#211f1f 50%,#1e1f22 75%,#1d1e20);font-family:"Open Sans","Noto Sans",sans-serif;font-size:12px}
.c{width:48px;height:40px;margin-right:1px;box-sizing:border-box;display:flex;align-items:center;justify-content:center;flex:none}
.c:nth-of-type(2){width:47px;margin-right:3px}
.o{background:linear-gradient(#adb6f7,#adb6f7) center bottom/40px 2px no-repeat}.f{background:linear-gradient(#adb6f7,#adb6f7) center bottom/48px 2px no-repeat,#505050}
.t{display:flex;align-items:center;margin-left:auto}.dt{display:flex;flex-direction:column;align-items:center;line-height:18px;width:60px;margin-left:14px}
.e{width:1px;height:40px;background:#777;margin:0 4px 0 20px}</style>
${[['win',16],['find',24],['edge',24],['folder',22,18,'o'],['ma',24],['chrome',26,26,'f'],['cheat',24],['gear',20],['calc',18,24],['wow',24],['ruby',24],['discord',24],['vs',24],['vscode',24],['paint',24,24,'o'],['game',24,24,'o']].map(a=>`<div class="c ${a[3]||''}">${ic(a[0],a[1],a[2]||a[1])}</div>`).join('')}
<div class="t">${ic('tup',12,8)}${ic('tcam',12,16,'margin-left:13px')}${ic('twifi',14,14,'margin-left:12px')}${ic('tvol',16,14,'margin-left:8px')}${ft('ESP',19,'margin-left:12px')}<div class="dt">${ft('1:34',21)}${ft('18-06-2025',58)}</div>${ic('tnote',16,16,'margin-left:17px')}<div class="e"></div></div>`);

el('ui-icon',h=>{const [vb,p]=ICONS[h.getAttribute('name')],w=h.getAttribute('w'),t=h.getAttribute('h');return `<style>:host{display:inline-flex;flex:none;width:${w}px;height:${t}px}svg{display:block}</style><svg width="${w}" height="${t}" viewBox="${vb}">${p}</svg>`});
// Text run that tracks its letters to fill a given width.
customElements.define('fit-text',class extends HTMLElement{
  constructor(){super();this.attachShadow({mode:'open'}).innerHTML='<style>:host{display:inline-block;white-space:nowrap;flex:none}span{display:inline-block}</style><span><slot></slot></span>'}
  connectedCallback(){const s=this.shadowRoot.querySelector('span'),w=+this.getAttribute('w'),n=this.textContent.length;
    const nat=s.getBoundingClientRect().width;s.style.letterSpacing=((w-nat)/Math.max(1,n-1))+'px';this.style.width=w+'px'}
});
</script>
</body>
</html>
